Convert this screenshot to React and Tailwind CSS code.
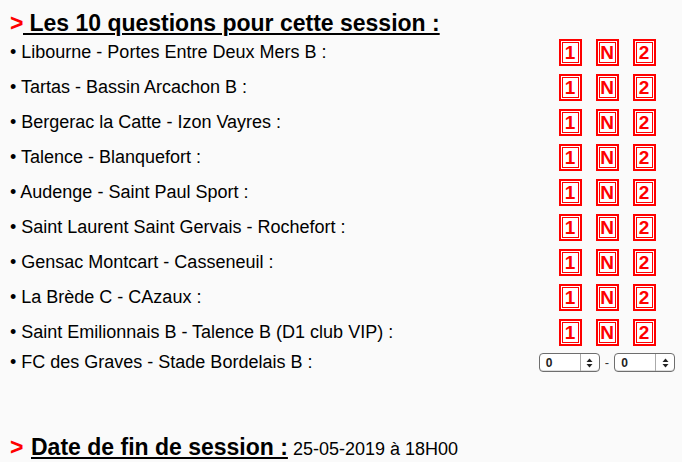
import { useState } from "react";

const MATCHES = [
  "Libourne - Portes Entre Deux Mers B :",
  "Tartas - Bassin Arcachon B :",
  "Bergerac la Catte - Izon Vayres :",
  "Talence - Blanquefort :",
  "Audenge - Saint Paul Sport :",
  "Saint Laurent Saint Gervais - Rochefort :",
  "Gensac Montcart - Casseneuil :",
  "La Brède C - CAzaux :",
  "Saint Emilionnais B - Talence B (D1 club VIP) :",
];

function ChoiceBox({ label }) {
  return (
    <span className="flex h-[27px] w-[23px] border-2 border-[#ff0000] bg-white">
      <span className="m-[1px] flex flex-1 items-center justify-center border border-[#ff0000] text-[19px] font-bold leading-none text-[#ff0000]">
        {label}
      </span>
    </span>
  );
}

function ScoreSelect() {
  return (
    <span className="flex h-[19px] w-[61px] overflow-hidden rounded-[4px] border border-[#6e6e6e] bg-white shadow-[inset_0_-1px_0_#ddd]">
      <span className="flex flex-1 items-center pl-[6px] text-[12px] font-bold text-[#222]">0</span>
      <span className="flex w-[19px] items-center justify-center border-l border-[#aaa]">
        <svg width="7" height="10" viewBox="0 0 7 10">
          <path d="M3.5 0.5 L6.5 4 L0.5 4 Z" fill="#222" />
          <path d="M3.5 9.5 L6.5 6 L0.5 6 Z" fill="#222" />
        </svg>
      </span>
    </span>
  );
}

export default function App() {
  const [picks] = useState(MATCHES.map(() => null));

  return (
    <main className="min-h-[462px] w-[682px] bg-[#fafafa] pl-[10px] pt-[11px] font-['Liberation_Sans',Arial,sans-serif] text-black">
      <h2 className="flex h-[24px] items-center text-[23px] font-bold leading-none">
        <span className="w-[13px] text-[#ff0000]">&gt;</span>
        <span className="underline decoration-[1.5px] underline-offset-[2px] whitespace-pre"> Les 10 questions pour cette session :</span>
      </h2>

      <ul className="mt-[4px] flex flex-col gap-[8px]">
        {MATCHES.map((match, index) => (
          <li key={match} className="flex h-[27px] items-center justify-between">
            <span className="text-[18px]">• {match}</span>
            <span className="flex w-[150px] justify-center gap-[14px]" data-pick={picks[index] ?? ""}>
              <ChoiceBox label="1" />
              <ChoiceBox label="N" />
              <ChoiceBox label="2" />
            </span>
          </li>
        ))}
        <li className="-mt-[1px] flex h-[19px] items-center justify-between">
          <span className="text-[18px]">• FC des Graves - Stade Bordelais B :</span>
          <span className="flex w-[150px] items-center justify-center gap-[5px]">
            <ScoreSelect />
            <span className="text-[13px] text-[#333]">-</span>
            <ScoreSelect />
          </span>
        </li>
      </ul>

      <p className="mt-[58px] flex items-baseline">
        <span className="w-[21px] text-[23px] font-bold text-[#ff0000]">&gt;</span>
        <span className="text-[23px] font-bold underline decoration-[1.5px] underline-offset-[2px]">Date de fin de session :</span>
        <span className="whitespace-pre text-[18px]"> 25-05-2019 à 18H00</span>
      </p>
    </main>
  );
}
